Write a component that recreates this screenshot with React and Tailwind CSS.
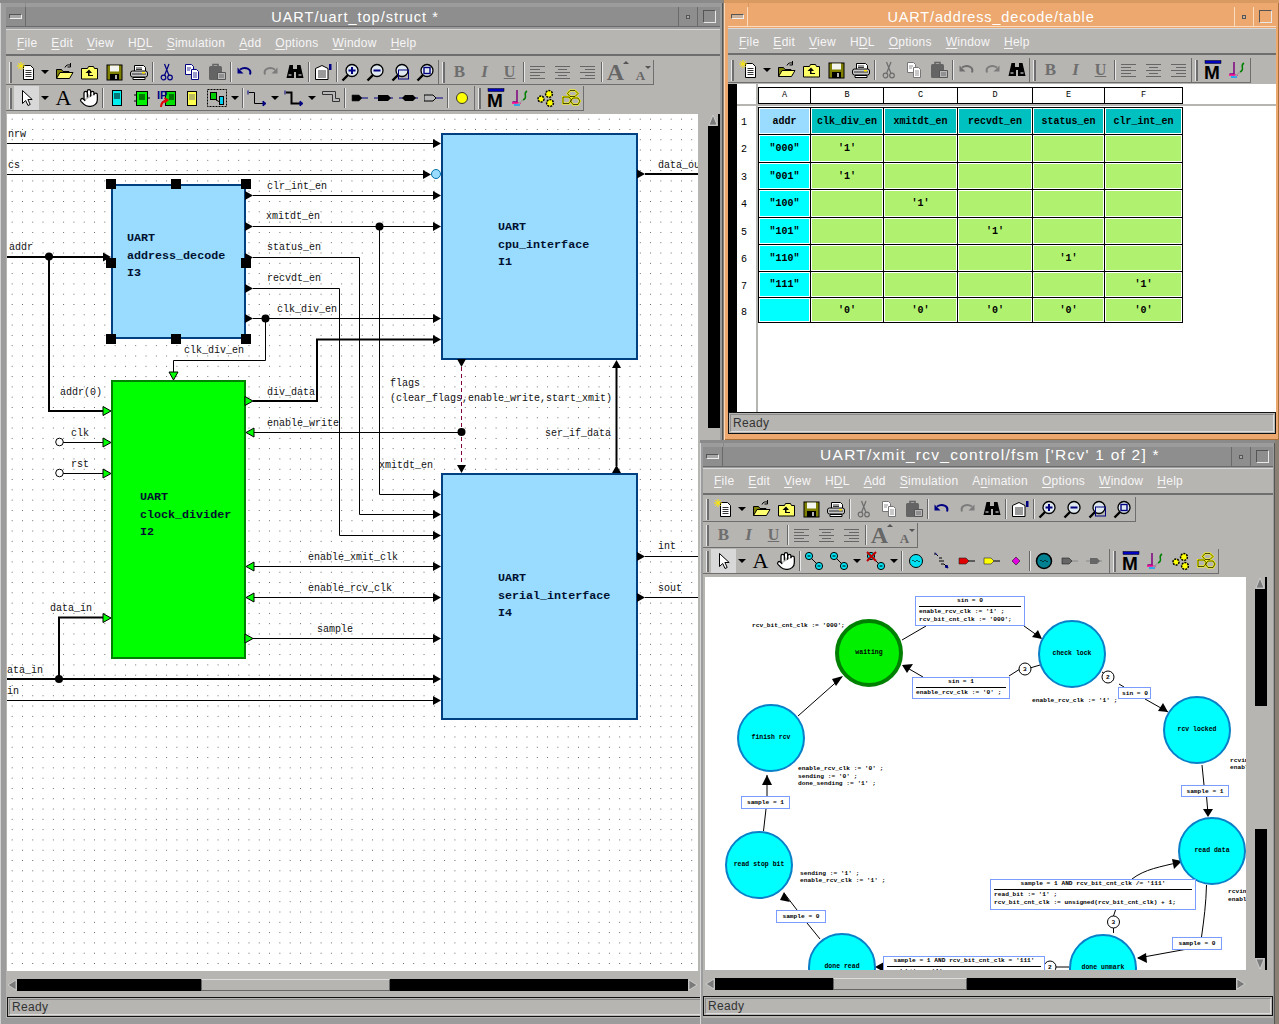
import { Hand } from 'lucide-react'

const Svg = ({ children }) => (
  <svg width="20" height="20" viewBox="0 0 20 20" className="block">{children}</svg>
)

const gearPair = (
  <g fill="#ffff00" stroke="#000" strokeWidth="1.5">
    <circle cx="5" cy="11" r="3" strokeDasharray="2 1" />
    <circle cx="13" cy="6" r="3.4" strokeDasharray="2 1" />
    <circle cx="14" cy="15" r="3.4" strokeDasharray="2 1" />
  </g>
)

const scissors = (c) => (
  <g fill="none" stroke={c} strokeWidth="1.2">
    <circle cx="6.5" cy="15.5" r="2.3" />
    <circle cx="13" cy="15.5" r="2.3" />
    <path d="M7.5 13.5 12 2M12 13.5 7.5 2" />
  </g>
)

const copyDocs = (c) => (
  <g fill="#fff" stroke={c} strokeWidth="1">
    <path d="M3.5 2.5h6l2 2v8h-8z" />
    <path d="M9.5 7.5h5l2 2v8h-7z" />
    <path d="M5 6h4M5 8h3M11 11h4M11 13h4M11 15h4" strokeWidth="0.8" />
  </g>
)

const zoomLens = (inner) => (
  <g>
    <path d="M7 13 1.5 18.5" stroke="#000" strokeWidth="2.4" />
    <circle cx="11" cy="8.5" r="6" fill="#dfe8ee" stroke="#000" strokeWidth="1.3" />
    {inner}
  </g>
)

const alignLines = (rows) => (
  <path d={rows} stroke="#666" strokeWidth="1" fill="none" />
)

const portShape = (body, line) => (
  <g>
    <path d="M11 10h8" stroke={line} strokeWidth="1" />
    <path d="M3 7h7l3 3-3 3H3z" fill={body} stroke="#222" strokeWidth="0.6" />
  </g>
)

const twoStates = (
  <g stroke="#000" strokeWidth="1" fill="#00e0f0">
    <path d="M5 5 15 15" fill="none" />
    <circle cx="5" cy="5" r="3.6" />
    <circle cx="15" cy="15" r="3.6" />
    <path d="M3.5 5h3M13.5 15h3" />
  </g>
)

const icons = {
  new: (
    <Svg>
      <path d="M6.5 3.5h7l3 3v11h-10z" fill="#fff" stroke="#000" />
      <path d="M8.5 8.5h6M8.5 10.5h6M8.5 12.5h6M8.5 14.5h6" stroke="#000" strokeWidth="0.8" />
      <path d="M4 0v8M0 4h8M1.2 1.2l5.6 5.6M6.8 1.2 1.2 6.8" stroke="#ffe800" strokeWidth="1" />
    </Svg>
  ),
  open: (
    <Svg>
      <path d="M2.5 16V7.5h5l1.5 2h6V16z" fill="#808000" stroke="#000" />
      <path d="M2.5 16.5 6 10.5h13l-3.5 6z" fill="#ffff70" stroke="#000" />
      <path d="M11 5.5c1-2.5 3-3 5.5-2.5M16.5 1v4h-3" fill="none" stroke="#000" />
    </Svg>
  ),
  up: (
    <Svg>
      <path d="M2.5 17V6.5h6l1-2h5l1 2h3V17z" fill="#ffff66" stroke="#000" />
      <path d="M10 7.5 6.5 11H9v3h5v-1h-3.5v-2H13z" fill="#000" />
    </Svg>
  ),
  save: (
    <Svg>
      <rect x="3" y="3" width="15" height="15" fill="#808000" stroke="#000" />
      <rect x="6" y="3.5" width="9" height="6" fill="#f4f4f0" />
      <rect x="6" y="12" width="9" height="6" fill="#000" />
      <rect x="11" y="13" width="2" height="4" fill="#b4b4b0" />
    </Svg>
  ),
  print: (
    <Svg>
      <path d="M5.5 9V3.5h9l2 2V9" fill="#fff" stroke="#000" />
      <rect x="1.5" y="9" width="17" height="6" rx="2" fill="#c8c8c8" stroke="#000" />
      <path d="M4 15.5h12v2H4z" fill="#fff" stroke="#000" />
      <path d="M7 6h6M7 7.5h6M3 12h14" stroke="#000" strokeWidth="0.8" />
      <rect x="13" y="10" width="3" height="1.5" fill="#ffe800" />
    </Svg>
  ),
  cut: <Svg>{scissors('#000080')}</Svg>,
  cutOff: <Svg>{scissors('#6c6c6c')}</Svg>,
  copy: <Svg>{copyDocs('#000080')}</Svg>,
  copyOff: <Svg>{copyDocs('#777')}</Svg>,
  paste: (
    <Svg>
      <rect x="2" y="4" width="13" height="14" rx="1.5" fill="#646464" />
      <path d="M6 4.5V2.5h5v2" fill="none" stroke="#646464" strokeWidth="1.6" />
      <path d="M10.5 10.5h8v7h-8z" fill="#b8b8b8" stroke="#555" />
      <path d="M12 13h5M12 15h5" stroke="#555" strokeWidth="0.8" />
    </Svg>
  ),
  undo: (
    <Svg>
      <path d="M5 7.5c5-3 12-1 10 5" fill="none" stroke="#000080" strokeWidth="2" />
      <path d="M2.5 5.5v6h6z" fill="#000080" />
    </Svg>
  ),
  undoOff: (
    <Svg>
      <path d="M5 7.5c5-3 12-1 10 5" fill="none" stroke="#6e6e6e" strokeWidth="2" />
      <path d="M2.5 5.5v6h6z" fill="#6e6e6e" />
    </Svg>
  ),
  redo: (
    <Svg>
      <path d="M15 7.5c-5-3-12-1-10 5" fill="none" stroke="#7c7c7c" strokeWidth="2" />
      <path d="M17.5 5.5v6h-6z" fill="#7c7c7c" />
    </Svg>
  ),
  bino: (
    <Svg>
      <path d="M4.5 3h3.5v4h4V3h3.5l3 13h-7.5V10h-2v6H1.5z" fill="#000" />
      <path d="M3.5 13h3M13.5 13h3" stroke="#fff" strokeWidth="1" />
    </Svg>
  ),
  props: (
    <Svg>
      <path d="M2.5 6.5 9 3.5l6 3v11H2.5z" fill="#fff" stroke="#000" />
      <path d="M5 9h8M5 11h8M5 13h8M5 15h8" stroke="#000" strokeWidth="0.8" />
      <rect x="16" y="2" width="2.5" height="6" fill="#000080" />
    </Svg>
  ),
  zin: <Svg>{zoomLens(<path d="M7.5 8.5h7M11 5v7" stroke="#000080" strokeWidth="2" />)}</Svg>,
  zout: <Svg>{zoomLens(<path d="M7.5 8.5h7" stroke="#000080" strokeWidth="2" />)}</Svg>,
  zfit: <Svg>{zoomLens(<rect x="7.5" y="8" width="10" height="9" fill="none" stroke="#000080" />)}</Svg>,
  zsel: <Svg>{zoomLens(<rect x="8" y="5.5" width="6" height="6" fill="none" stroke="#000080" strokeWidth="1.4" />)}</Svg>,
  bold: <span className="font-['Liberation_Serif',serif] text-[17px] font-bold text-[#6e6e6e]">B</span>,
  italic: <span className="font-['Liberation_Serif',serif] text-[17px] font-bold italic text-[#6e6e6e]">I</span>,
  under: <span className="font-['Liberation_Serif',serif] text-[16px] font-bold text-[#6e6e6e] underline">U</span>,
  left: <Svg>{alignLines('M2 4.5h15M2 7.5h10M2 10.5h15M2 13.5h10M2 16.5h15')}</Svg>,
  center: <Svg>{alignLines('M2 4.5h15M5 7.5h9M2 10.5h15M5 13.5h9M2 16.5h15')}</Svg>,
  right: <Svg>{alignLines('M2 4.5h15M7 7.5h10M2 10.5h15M7 13.5h10M2 16.5h15')}</Svg>,
  bigA: (
    <span className="relative font-['Liberation_Serif',serif] text-[24px] leading-none font-bold text-[#666]">
      A
      <span className="absolute top-[1px] -right-[5px] h-0 w-0 border-x-[3px] border-b-[3px] border-x-transparent border-b-[#555]" />
    </span>
  ),
  smallA: (
    <span className="relative mt-[6px] font-['Liberation_Serif',serif] text-[13px] leading-none font-bold text-[#666]">
      A
      <span className="absolute -top-[3px] -right-[6px] h-0 w-0 border-x-[3px] border-t-[3px] border-x-transparent border-t-[#555]" />
    </span>
  ),
  arrow: (
    <Svg>
      <path d="M5.5 2.5v13l3.2-3 2.3 5 2.2-1-2.3-5h4.3z" fill="#fff" stroke="#000" />
    </Svg>
  ),
  text: <span className="font-['Liberation_Serif',serif] text-[22px] leading-none text-black">A</span>,
  hand: <Hand size={20} fill="#fff" color="#000" strokeWidth={1.5} />,
  blockCyan: (
    <Svg>
      <rect x="5.5" y="2.5" width="9" height="15" fill="#00f0f0" stroke="#000" />
      <path d="M7 6h6M7 8h6M7 10h6" stroke="#000" />
    </Svg>
  ),
  blockGreen: (
    <Svg>
      <rect x="4.5" y="3.5" width="11" height="14" fill="#00f000" stroke="#000" />
      <path d="M7 7h6M7 9h6M7 11h6M2 7h3M2 13h3M15 10h3" stroke="#000" />
    </Svg>
  ),
  ip: (
    <Svg>
      <rect x="8.5" y="3.5" width="10" height="14" fill="#00e000" stroke="#000" />
      <path d="M12 7h5M12 9h5M12 11h5" stroke="#000" />
      <text x="0" y="11" fontSize="11" fontWeight="bold" fontFamily="Liberation Sans" fill="#000080">IP</text>
      <path d="M4 19c0-4 2-6 6-7M7.5 10l3 2-3 2.5" fill="none" stroke="#e00000" strokeWidth="2" />
    </Svg>
  ),
  blockYellow: (
    <Svg>
      <rect x="5.5" y="3.5" width="9" height="14" fill="#ffff50" stroke="#000" />
      <path d="M7 7h6M7 9h6M7 11h6" stroke="#777" />
    </Svg>
  ),
  group: (
    <Svg>
      <rect x="0.5" y="1.5" width="19" height="17" fill="none" stroke="#000" strokeDasharray="2 1" />
      <rect x="3.5" y="4.5" width="6" height="7" fill="#00d000" stroke="#000" />
      <rect x="12.5" y="8.5" width="4" height="8" fill="#00d0f0" stroke="#000" />
      <path d="M9 12 13 14" stroke="#000" />
    </Svg>
  ),
  wire: (
    <Svg>
      <path d="M2 4.5h5.5v11H16" fill="none" stroke="#000" />
      <path d="M1 2.5v4M16 13v5l3-2.5z" fill="#000080" stroke="#000080" />
    </Svg>
  ),
  bus: (
    <Svg>
      <path d="M2 4.5h5.5v11H16" fill="none" stroke="#000" strokeWidth="2" />
      <path d="M1 2.5v4M16 13v5l3-2.5z" fill="#000080" stroke="#000080" />
    </Svg>
  ),
  ripper: (
    <Svg>
      <path d="M1.5 6.5h10v7h7v-3h-4v-7h-13z" fill="#b8b8b8" stroke="#333" strokeWidth="1" />
    </Svg>
  ),
  portIn: <Svg>{portShape('#000', '#000080')}</Svg>,
  portBuf: (
    <Svg>
      <path d="M0 10h19" stroke="#000080" />
      <path d="M4 7h10l3 3-3 3H4z" fill="#000" />
    </Svg>
  ),
  portBi: (
    <Svg>
      <path d="M0 10h19" stroke="#000080" />
      <path d="M3 10l3-3h8l3 3-3 3H6z" fill="#000" />
    </Svg>
  ),
  portGhost: (
    <Svg>
      <path d="M12 10h7" stroke="#000080" />
      <path d="M0 7h9l3 3-3 3H0z" fill="#b8b8b8" stroke="#000" />
    </Svg>
  ),
  dot: (
    <Svg>
      <circle cx="10" cy="10" r="5.5" fill="#ffff00" stroke="#333" />
    </Svg>
  ),
  mBar: (
    <Svg>
      <rect x="2" y="0.5" width="16" height="3" fill="#0000c0" stroke="#000" strokeWidth="0.5" />
      <text x="1" y="19" fontSize="19" fontWeight="bold" fontFamily="Liberation Sans" fill="#000">M</text>
    </Svg>
  ),
  squiggle: (
    <Svg>
      <path d="M6 2v12H1.5" fill="none" stroke="#800080" strokeWidth="1.5" />
      <path d="M1 15h9" stroke="#ff0090" strokeWidth="1.5" />
      <path d="M3 17h6" stroke="#00a0ff" strokeWidth="1.5" />
      <path d="M16 3c-5 3 2 6-4 9" fill="none" stroke="#008000" strokeWidth="1.5" />
      <path d="M12 12c-2 2-3 3-5 4" fill="none" stroke="#a0a0a0" strokeWidth="1.5" />
    </Svg>
  ),
  gears: <Svg>{gearPair}</Svg>,
  links: (
    <Svg>
      <g fill="#b6b5b2" stroke="#ffff00" strokeWidth="2">
        <path d="M9 2.5h5l3 3-3 3H9L6.5 5.5z" />
        <path d="M2 9h6l2.5 3-2.5 3.5H2z" />
        <path d="M12 10h5l2 3-2 3.5h-5L9.5 13z" />
      </g>
      <path d="M2 9h6l2.5 3-2.5 3.5H2zM9 2.5h5l3 3-3 3H9L6.5 5.5zM12 10h5l2 3-2 3.5h-5L9.5 13z" fill="none" stroke="#000" strokeWidth="0.7" />
    </Svg>
  ),
  states: <Svg>{twoStates}</Svg>,
  statesX: (
    <Svg>
      {twoStates}
      <path d="M1 1l9 9M10 1l-9 9" stroke="#c00000" strokeWidth="2" />
    </Svg>
  ),
  stateIcon: (
    <Svg>
      <circle cx="10" cy="10" r="6.5" fill="#00e0f0" stroke="#000" />
      <path d="M6 10c1-1 1-1 2 0s1 1 2 0 1-1 2 0 1 1 2 0" stroke="#000" fill="none" strokeWidth="0.7" />
    </Svg>
  ),
  fork: (
    <Svg>
      <path d="M3 3h2l2 2M8 7h3M8 10h5M10 13h3l3 3" fill="none" stroke="#000" />
      <path d="M4 1.5 6 4M17 17l-3-1 2-2z" fill="#000080" stroke="#000080" />
    </Svg>
  ),
  fsmRed: <Svg>{portShape('#e00000', '#000')}</Svg>,
  fsmYellow: <Svg>{portShape('#ffff00', '#000')}</Svg>,
  diamond: (
    <Svg>
      <path d="M10 6l4 4-4 4-4-4z" fill="#e000e0" stroke="#000" strokeWidth="0.5" />
    </Svg>
  ),
  stateDark: (
    <Svg>
      <circle cx="10" cy="10" r="7.5" fill="#008090" stroke="#000" strokeWidth="1.5" />
      <path d="M6 10c1-1 1-1 2 0s1 1 2 0 1-1 2 0 1 1 2 0" stroke="#000" fill="none" strokeWidth="0.7" />
    </Svg>
  ),
  ghostA: <Svg>{portShape('#666', '#888')}</Svg>,
  ghostB: (
    <Svg>
      <path d="M2 10h16" stroke="#888" />
      <path d="M6 7h7l3 3-3 3H6z" fill="#666" />
    </Svg>
  ),
}

function Toolbar({ items }) {
  return (
    <div className="flex h-full items-center border-r border-b border-[#6e6e6e]">
      <div className="flex h-full w-[8px] shrink-0 items-center pl-[3px]">
        <div className="h-[21px] w-[3px] border-r-2 border-l border-r-[#6e6e6e] border-l-[#e8e8e8]" />
      </div>
      {items.map((item, i) => {
        if (item === '|') {
          return (
            <div key={i} className="flex h-full w-[3px] justify-center py-[2px]">
              <div className="w-[2px] border-r border-l border-r-[#e8e8e8] border-l-[#666]" />
            </div>
          )
        }
        if (item === 'dd') {
          return (
            <div key={i} className="flex h-full w-[12px] items-center justify-center">
              <div className="h-0 w-0 border-x-[4px] border-t-[4px] border-x-transparent border-t-black" />
            </div>
          )
        }
        if (item === 'gap') return <div key={i} className="w-[3px]" />
        const active = item === 'arrow'
        return (
          <div key={i} className={`flex h-full w-[25px] items-center justify-center ${active ? 'bg-[#d8d8d8]' : ''}`}>
            {icons[item]}
          </div>
        )
      })}
    </div>
  )
}

function Menu({ items, className }) {
  return (
    <div className={`flex h-[27px] items-center gap-[14px] border-t border-b-2 border-t-[#d8d8d8] border-b-[#6e6e6e] pl-[11px] text-[12px] tracking-[0.25px] text-[#f6f6f6] ${className}`}>
      {items.map(([before, key, after]) => (
        <span key={before + key + after}>
          {before}
          <span className="underline underline-offset-[2px]">{key}</span>
          {after}
        </span>
      ))}
    </div>
  )
}

function StatusBar({ className }) {
  return (
    <div className={`border border-[#111] p-[1px] ${className}`}>
      <div className="flex h-full items-center border border-[#8a8a8a] border-r-[#dedede] border-b-[#dedede] pl-[2px] text-[12px] tracking-[0.3px] text-[#333]">
        Ready
      </div>
    </div>
  )
}

function Window({ className, frame, titleBg, line, title, titleText, tickClass, menus, menuClass, menuText = '', rows, rowsClass, children, statusClass }) {
  return (
    <div className={`absolute flex flex-col ${frame} ${className}`}>
      <div className={`absolute top-0 left-0 h-[3px] w-full ${line}`} />
      <div className={`absolute top-0 h-[7px] w-px ${line} ${tickClass}`} />
      <div className={`flex h-[20px] shrink-0 border-b ${titleBg}`}>
        <div className="flex w-[20px] items-center justify-center border-r border-inherit">
          <div className="h-[5px] w-[13px] border border-[#555] border-r-[#eee] border-b-[#eee] bg-[#b8b8b8]/60" />
        </div>
        <div className={`flex-1 truncate text-center leading-[19px] font-medium text-white ${titleText}`}>{title}</div>
        <div className="flex w-[20px] items-center justify-center border-x border-inherit">
          <div className="h-[4px] w-[4px] border border-[#555] bg-[#b8b8b8]/60" />
        </div>
        <div className="flex w-[22px] items-center justify-center">
          <div className="h-[13px] w-[13px] border border-[#555] border-r-[#e8e8e8] border-b-[#e8e8e8]" />
        </div>
      </div>
      <div className={`flex flex-1 flex-col bg-[#b6b5b2] ${menuClass}`}>
        <Menu items={menus} className={menuText} />
        <div className={`flex flex-col gap-[1px] ${rowsClass}`}>
          {rows.map((row, i) => (
            <div key={i} className="flex h-[25px]">
              {row.map((items, j) => (
                <Toolbar key={j} items={items} />
              ))}
            </div>
          ))}
        </div>
        {children}
        <StatusBar className={statusClass} />
      </div>
    </div>
  )
}

const Triangle = ({ dir }) => (
  <svg width="10" height="12" viewBox="0 0 10 12" className="block shrink-0">
    <rect width="10" height="12" fill="#b6b5b2" />
    {dir === 'left' && <path d="M9 1v10L1 6z" fill="#7a7a7a" stroke="#e8e8e8" strokeWidth="0.6" />}
    {dir === 'right' && <path d="M1 1v10l8-5z" fill="#7a7a7a" stroke="#e8e8e8" strokeWidth="0.6" />}
    {dir === 'up' && <path d="M1 11h8L5 1z" fill="#7a7a7a" stroke="#e8e8e8" strokeWidth="0.6" />}
    {dir === 'down' && <path d="M1 1h8l-4 10z" fill="#7a7a7a" stroke="#e8e8e8" strokeWidth="0.6" />}
  </svg>
)

const dots = "bg-white bg-[radial-gradient(circle,#5c5c5c_0.6px,transparent_0.9px)] bg-[length:10.3px_10.3px]"

const marks = [
  '-top-[7px] -left-[7px]', '-top-[7px] left-[58px]', '-top-[7px] -right-[7px]',
  'top-[72px] -left-[7px]', 'top-[72px] -right-[7px]',
  '-bottom-[7px] -left-[7px]', '-bottom-[7px] left-[58px]', '-bottom-[7px] -right-[7px]',
]

const BlockLabel = ({ lines }) => (
  <div className="font-['Liberation_Mono',monospace] text-[11.7px] leading-[17.5px] font-bold text-[#001030]">
    {lines.map((l) => <div key={l}>{l}</div>)}
  </div>
)

const Arrow = ({ x, y, dir = 'r', fill = '#000', stroke = 'none' }) => {
  const s = 4.5
  const pts = {
    r: `${x - 8},${y - s} ${x},${y} ${x - 8},${y + s}`,
    l: `${x + 8},${y - s} ${x},${y} ${x + 8},${y + s}`,
    d: `${x - s},${y - 8} ${x},${y} ${x + s},${y - 8}`,
    u: `${x - s},${y + 8} ${x},${y} ${x + s},${y + 8}`,
  }[dir]
  return <polygon points={pts} fill={fill} stroke={stroke} />
}

const Junction = ({ x, y, r = 4 }) => <circle cx={x} cy={y} r={r} fill="#000" />

const thinWires = [
  'M7 143.5H434', 'M7 174.5H424', 'M253 195.5H434', 'M253 226.5H434', 'M379.5 226.5V494.5H434',
  'M253 257.5H359.5V514.5H434', 'M253 288.5H339.5V535.5H434', 'M253 318.5H434',
  'M265.5 318.5V360.5H173.5V372', 'M254 432.5H461', 'M254 566.5H434', 'M254 597.5H434', 'M253 638.5H434',
  'M63 442.5H104', 'M63 473.5H104', 'M7 700.5H434', 'M645 556.5H698', 'M645 597.5H698',
]

const boldWires = [
  'M7 257H104', 'M49 257V411H104', 'M253 401H317V339.5H434', 'M645 174H698', 'M616.5 368V466',
  'M7 679H434', 'M59 679V617.5H104',
]

const wireLabels = [
  ['nrw', 8, 137], ['cs', 8, 168], ['clr_int_en', 267, 189], ['xmitdt_en', 266, 219], ['status_en', 267, 250],
  ['recvdt_en', 267, 281], ['clk_div_en', 277, 312], ['clk_div_en', 184, 353], ['addr', 9, 250], ['addr(0)', 60, 395],
  ['div_data', 267, 395], ['enable_write', 267, 426], ['flags', 390, 386], ['(clear_flags,enable_write,start_xmit)', 390, 401],
  ['ser_if_data', 545, 436], ['xmitdt_en', 379, 468], ['data_out', 658, 168], ['int', 658, 549], ['sout', 658, 591],
  ['enable_xmit_clk', 308, 560], ['enable_rcv_clk', 308, 591], ['sample', 317, 632], ['clk', 71, 436], ['rst', 71, 467],
  ['data_in', 50, 611], ['data_in', 1, 673], ['in', 7, 694],
]

function Schematic() {
  return (
    <div className={`relative h-[857px] w-[691px] shrink-0 overflow-hidden ${dots}`}>
      <div className="absolute top-[70px] left-[104px] h-[155px] w-[135px] border-2 border-[#004080] bg-[#99dcff] pt-[44px] pl-[14px]">
        <BlockLabel lines={['UART', 'address_decode', 'I3']} />
        {marks.map((m) => <div key={m} className={`absolute h-[10px] w-[10px] bg-black ${m}`} />)}
      </div>
      <div className="absolute top-[19px] left-[434px] h-[227px] w-[197px] border-2 border-[#004080] bg-[#99dcff] pt-[84px] pl-[55px]">
        <BlockLabel lines={['UART', 'cpu_interface', 'I1']} />
      </div>
      <div className="absolute top-[266px] left-[104px] h-[279px] w-[135px] border-2 border-[#008000] bg-[#00ff00] pt-[107px] pl-[27px]">
        <BlockLabel lines={['UART', 'clock_divider', 'I2']} />
      </div>
      <div className="absolute top-[359px] left-[434px] h-[247px] w-[197px] border-2 border-[#004080] bg-[#99dcff] pt-[95px] pl-[55px]">
        <BlockLabel lines={['UART', 'serial_interface', 'I4']} />
      </div>
      <svg width="691" height="857" viewBox="7 114 691 857" className="absolute inset-0 font-['Liberation_Mono',monospace] text-[10px]">
        {thinWires.map((d) => <path key={d} d={d} fill="none" stroke="#000" />)}
        {boldWires.map((d) => <path key={d} d={d} fill="none" stroke="#000" strokeWidth="2" />)}
        <path d="M461.5 367V465" fill="none" stroke="#800040" strokeDasharray="4 3" />
        {[143.5, 195.5, 226.5, 318.5, 339.5, 494.5, 514.5, 535.5, 566.5, 597.5, 638.5, 679, 700.5].map((y) => (
          <Arrow key={y} x={441} y={y} />
        ))}
        <Arrow x={431} y={174.5} />
        <circle cx="436" cy="174" r="4.5" fill="#99dcff" stroke="#0070a8" />
        {[195.5, 226.5, 257.5, 288.5, 318.5].map((y) => <Arrow key={y} x={253} y={y} />)}
        <Arrow x={111} y={257} />
        <Arrow x={111} y={411} fill="#00ff00" stroke="#000" />
        <Arrow x={111} y={442.5} fill="#00ff00" stroke="#000" />
        <Arrow x={111} y={473.5} fill="#00ff00" stroke="#000" />
        <Arrow x={111} y={618} fill="#00ff00" stroke="#000" />
        <Arrow x={253} y={401} fill="#00ff00" stroke="#000" />
        <Arrow x={253} y={638.5} fill="#00ff00" stroke="#000" />
        <Arrow x={246} y={432.5} dir="l" fill="#00ff00" stroke="#000" />
        <Arrow x={246} y={566.5} dir="l" fill="#00ff00" stroke="#000" />
        <Arrow x={246} y={597.5} dir="l" fill="#00ff00" stroke="#000" />
        <Arrow x={173.5} y={380} dir="d" fill="#00ff00" stroke="#000" />
        <Arrow x={461.5} y={367} dir="d" />
        <Arrow x={461.5} y={473} dir="d" />
        <Arrow x={616.5} y={360} dir="u" />
        <Arrow x={616.5} y={465} dir="u" />
        <Arrow x={645} y={174} />
        <Arrow x={645} y={556.5} />
        <Arrow x={645} y={597.5} />
        <Junction x={49} y={256.5} />
        <Junction x={379.5} y={226.5} />
        <Junction x={265.5} y={318.5} />
        <Junction x={461.5} y={432} />
        <Junction x={59} y={679} />
        <circle cx="59.5" cy="442" r="3.8" fill="#fff" stroke="#000" />
        <circle cx="59.5" cy="473" r="3.8" fill="#fff" stroke="#000" />
        {wireLabels.map(([t, x, y]) => (
          <text key={t + x + y} x={x} y={y} fill="#111">{t}</text>
        ))}
      </svg>
    </div>
  )
}

const columns = ['A', 'B', 'C', 'D', 'E', 'F']
const headers = ['addr', 'clk_div_en', 'xmitdt_en', 'recvdt_en', 'status_en', 'clr_int_en']
const tableRows = [
  { n: 2, h: 'h-[27px]', vals: ['"000"', "'1'", '', '', '', ''] },
  { n: 3, h: 'h-[26px]', vals: ['"001"', "'1'", '', '', '', ''] },
  { n: 4, h: 'h-[27px]', vals: ['"100"', '', "'1'", '', '', ''] },
  { n: 5, h: 'h-[26px]', vals: ['"101"', '', '', "'1'", '', ''] },
  { n: 6, h: 'h-[26px]', vals: ['"110"', '', '', '', "'1'", ''] },
  { n: 7, h: 'h-[25px]', vals: ['"111"', '', '', '', '', "'1'"] },
  { n: 8, h: 'h-[24px]', vals: ['', "'0'", "'0'", "'0'", "'0'", "'0'"] },
]
const gridCols = 'grid grid-cols-[51px_72px_73px_74px_71px_77px]'

function Truth() {
  return (
    <div className="mt-[1px] flex h-[328px] bg-white font-['Liberation_Mono',monospace] text-[10px] font-bold">
      <div className="w-[9px] shrink-0 bg-black" />
      <div className="relative flex-1 pt-[3px] pl-[21px]">
        <div className="absolute top-0 bottom-0 left-[19px] w-[2px] bg-[#b6b5b2]" />
        <div className="absolute top-[20px] right-0 left-0 h-[2px] bg-[#b6b5b2]" />
        <div className="relative grid h-[17px] w-max grid-cols-[52px_73px_74px_75px_72px_78px] border-t border-l border-black">
          {columns.map((c) => (
            <div key={c} className="flex items-center justify-center border-r border-b border-black bg-white text-[8.5px] font-normal">{c}</div>
          ))}
        </div>
        <div className="relative mt-[3px] w-max bg-black p-px">
          <div className="absolute top-[8px] -left-[17px] text-[10px] font-normal">1</div>
          <div className={`${gridCols} h-[26px] gap-px`}>
            {headers.map((t, i) => (
              <div key={t} className={`flex items-center justify-center border border-white ${i === 0 ? 'bg-[#99dcff]' : 'bg-[#00c0c0]'}`}>{t}</div>
            ))}
          </div>
          {tableRows.map((row) => (
            <div key={row.n} className={`relative mt-px ${gridCols} gap-px ${row.h}`}>
              <div className="absolute top-[7px] -left-[18px] text-[10px] font-normal">{row.n}</div>
              {row.vals.map((v, i) => (
                <div key={i} className={`flex items-center justify-center border border-white ${i === 0 ? 'bg-[#00ffff]' : 'bg-[#b0f270]'}`}>{v}</div>
              ))}
            </div>
          ))}
        </div>
      </div>
    </div>
  )
}

const State = ({ className, label, green }) => (
  <div className={`absolute flex h-[68px] w-[68px] items-center justify-center rounded-full text-[6.5px] font-bold ${green ? 'border-[4px] border-[#008000] bg-[#00f000]' : 'border-2 border-[#0a80c8] bg-[#00ffff]'} ${className}`}>
    {label}
  </div>
)

const Note = ({ className, cond, lines }) => (
  <div className={`absolute border border-[#7b9cff] bg-white px-[3px] leading-[7px] font-bold ${className}`}>
    <div className={`text-center whitespace-nowrap ${lines ? 'border-b border-black pb-[2px]' : 'pt-[2px]'}`}>{cond}</div>
    {lines && lines.map((l) => <div key={l} className="mt-[1px] whitespace-nowrap">{l}</div>)}
  </div>
)

const fsmLines = [
  'M902 641 926 627', 'M1024 627 1041 639', 'M1040 666 1030 669', 'M1020 670 1009 677', 'M923 678 904 667',
  'M1102 673 1114 681', 'M1124 688 1119 685', 'M1145 700 1168 713', 'M1202 766 1204 786', 'M1206.5 797 1208 815',
  'M1206.5 886C1206 905 1204 920 1201.5 938', 'M1187.5 950 1138 959', 'M1113.5 934V929', 'M1113.5 917 1115.5 911',
  'M1132 880C1145 870 1160 868 1180 863', 'M1069 968H1056', 'M1044 968H883', 'M820 940 807 924', 'M797 911 784 894',
  'M763.5 832 766 810', 'M767 797V776', 'M798 717 842 678',
]

const fsmHeads = [
  '1042,640 1032,638 1038,631', '902,666 913,665 907,674', '1168,713 1158,712 1163,704', '1208,818 1203,810 1213,810',
  '1182,862 1172,860 1174,870', '1137,959 1146,954 1147,964', '875,968 884,963 884,973', '784,893 790,903 780,901',
  '767,776 762,786 772,786', '843,677 836,687 832,680',
]

const fsmNotes = [
  ["rcv_bit_cnt_clk := '000';", 752, 628], ["enable_rcv_clk := '1' ;", 1032, 703], ["enable_rcv_clk := '0' ;", 798, 771],
  ["sending := '0' ;", 798, 779], ["done_sending := '1' ;", 798, 786], ["rcving := '1' ;", 1230, 763], ["enable_rcv", 1230, 770],
  ["sending := '1' ;", 800, 876], ["enable_rcv_clk := '1' ;", 800, 883], ["rcving :", 1228, 894], ["enable_", 1228, 902],
]

function Fsm() {
  return (
    <div className="relative h-[393px] w-[541px] shrink-0 overflow-hidden bg-white font-['Liberation_Mono',monospace] text-[6.2px] text-black">
      <svg width="541" height="393" viewBox="705 578 541 393" className="absolute inset-0 font-['Liberation_Mono',monospace] text-[6.2px] font-bold">
        {fsmLines.map((d) => <path key={d} d={d} fill="none" stroke="#000" />)}
        {fsmHeads.map((p) => <polygon key={p} points={p} fill="#000" />)}
        {[[1025, 670, '3'], [1108, 678, '2'], [1113.5, 923, '3'], [1050, 968, '2']].map(([x, y, t]) => (
          <g key={x}>
            <circle cx={x} cy={y} r="6" fill="#fff" stroke="#000" />
            <text x={x - 2} y={y + 2}>{t}</text>
          </g>
        ))}
        {fsmNotes.map(([t, x, y]) => <text key={t} x={x} y={y}>{t}</text>)}
      </svg>
      <State className="top-[42px] left-[130px]" label="waiting" green />
      <State className="top-[43px] left-[333px]" label="check lock" />
      <State className="top-[119px] left-[458px]" label="rcv locked" />
      <State className="top-[127px] left-[32px]" label="finish rcv" />
      <State className="top-[240px] left-[473px]" label="read data" />
      <State className="top-[254px] left-[20px]" label="read stop bit" />
      <State className="top-[356px] left-[103px]" label="done read" />
      <State className="top-[357px] left-[364px]" label="done unmark" />
      <Note className="top-[19px] left-[210px] h-[30px] w-[110px]" cond="sin = 0" lines={["enable_rcv_clk := '1' ;", "rcv_bit_cnt_clk := '000';"]} />
      <Note className="top-[100px] left-[207px] h-[22px] w-[98px]" cond="sin = 1" lines={["enable_rcv_clk := '0' ;"]} />
      <Note className="top-[110px] left-[413px] h-[12px] w-[33px]" cond="sin = 0" />
      <Note className="top-[208px] left-[476px] h-[12px] w-[48px]" cond="sample = 1" />
      <Note className="top-[219px] left-[36px] h-[13px] w-[49px]" cond="sample = 1" />
      <Note className="top-[333px] left-[71px] h-[13px] w-[50px]" cond="sample = 0" />
      <Note className="top-[302px] left-[285px] h-[31px] w-[206px]" cond="sample = 1 AND rcv_bit_cnt_clk /= '111'" lines={["read_bit := '1' ;", "rcv_bit_cnt_clk := unsigned(rcv_bit_cnt_clk) + 1;"]} />
      <Note className="top-[360px] left-[467px] h-[13px] w-[50px]" cond="sample = 0" />
      <Note className="top-[379px] left-[178px] h-[30px] w-[162px]" cond="sample = 1 AND rcv_bit_cnt_clk = '111'" lines={["read_bit := '1' ;"]} />
    </div>
  )
}

const fileTools = ['new', 'dd', 'open', 'up', 'save', 'print', '|']
const fontTools = ['bold', 'italic', 'under', '|', 'left', 'center', 'right', '|', 'bigA', 'smallA']

export default function App() {
  return (
    <div className="relative h-[1024px] w-[1279px] overflow-hidden bg-[#8a8174] font-['Liberation_Sans',sans-serif]">
      <Window
        className="top-0 left-0 h-[1024px] w-[723px] pt-[7px] pr-[3px] pb-[6px] pl-[6px] shadow-[inset_1px_0_0_#d0d0d0,inset_-1px_0_0_#555]"
        frame="bg-[#9c9c9c]"
        line="bg-[#8a8a8a]"
        tickClass="left-[25px]"
        titleBg="bg-[#8e8e8e] border-[#6a6a6a]"
        titleText="pt-[1px] pl-[6px] text-[14.5px] tracking-[1px]"
        title="UART/uart_top/struct *"
        menus={[['', 'F', 'ile'], ['', 'E', 'dit'], ['', 'V', 'iew'], ['H', 'D', 'L'], ['', 'S', 'imulation'], ['', 'A', 'dd'], ['', 'O', 'ptions'], ['', 'W', 'indow'], ['', 'H', 'elp']]}
        menuClass="mt-[2px]"
        menuText="pt-[2px]"
        rowsClass="pt-[4px]"
        rows={[
          [
            [...fileTools, 'cut', 'copy', 'paste', '|', 'undo', 'redo', 'bino', '|', 'props', '|', 'zin', 'zout', 'zfit', 'zsel'],
            fontTools,
          ],
          [
            ['arrow', 'dd', 'text', 'hand', '|', 'blockCyan', 'blockGreen', 'ip', 'blockYellow', 'group', 'dd', '|', 'wire', 'dd', 'bus', 'dd', 'ripper', '|', 'portIn', 'portBuf', 'portBi', 'portGhost', '|', 'dot'],
            ['mBar', 'squiggle', 'gears', 'links'],
          ],
        ]}
        statusClass="mt-[6px] ml-[1px] h-[20px]"
      >
        <div className="mt-[3px] flex pl-[1px]">
          <Schematic />
          <div className="ml-[10px] flex h-[857px] w-[12px] flex-col bg-black">
            <Triangle dir="up" />
            <div className="h-[302px]" />
            <div className="h-[120px] bg-[#b6b5b2]" />
          </div>
        </div>
        <div className="mt-[8px] ml-[1px] flex h-[12px] w-[691px] bg-black">
          <Triangle dir="left" />
          <div className="ml-[184px] w-[189px] border border-[#666] border-t-[#ddd] bg-[#b6b5b2]" />
          <div className="flex-1" />
          <Triangle dir="right" />
        </div>
      </Window>

      <Window
        className="top-0 left-[724px] h-[440px] w-[555px] pt-[7px] pr-[3px] pb-[6px] pl-[4px] shadow-[inset_1px_0_0_#f8d8b8,inset_-1px_0_0_#a87038,inset_0_-1px_0_#a87038]"
        frame="bg-[#eca86e]"
        line="bg-[#d99a62]"
        tickClass="left-[24px]"
        titleBg="bg-[#eca86e] border-[#fbdcc0]"
        titleText="pt-[1px] text-[14.5px] tracking-[0.85px]"
        title="UART/address_decode/table"
        menus={[['', 'F', 'ile'], ['', 'E', 'dit'], ['', 'V', 'iew'], ['H', 'D', 'L'], ['', 'O', 'ptions'], ['', 'W', 'indow'], ['', 'H', 'elp']]}
        menuClass="mt-[1px]"
        menuText="pt-[2px]"
        rowsClass="pt-[3px]"
        rows={[
          [
            [...fileTools, 'cutOff', 'copyOff', 'paste', '|', 'undoOff', 'redo', 'bino'],
            ['bold', 'italic', 'under', '|', 'left', 'center', 'right'],
            ['mBar', 'squiggle'],
          ],
        ]}
        statusClass="h-[22px]"
      >
        <Truth />
      </Window>

      <Window
        className="top-[440px] left-[700px] h-[584px] w-[575px] pt-[7px] pr-[2px] pb-[6px] pl-[3px] shadow-[inset_1px_1px_0_#d8d8d8,inset_-1px_0_0_#555]"
        frame="bg-[#9c9c9c]"
        line="bg-[#8a8a8a]"
        tickClass="left-[23px]"
        titleBg="bg-[#8e8e8e] border-[#6a6a6a]"
        titleText="-mt-[2px] pl-[26px] text-[15.5px] tracking-[1.25px]"
        title="UART/xmit_rcv_control/fsm ['Rcv' 1 of 2] *"
        menus={[['', 'F', 'ile'], ['', 'E', 'dit'], ['', 'V', 'iew'], ['H', 'D', 'L'], ['', 'A', 'dd'], ['', 'S', 'imulation'], ['A', 'n', 'imation'], ['', 'O', 'ptions'], ['', 'W', 'indow'], ['', 'H', 'elp']]}
        menuClass="mt-[1px]"
        rowsClass="pt-[2px]"
        rows={[
          [[...fileTools, 'cutOff', 'copyOff', 'paste', '|', 'undo', 'redo', 'bino', '|', 'props', '|', 'zin', 'zout', 'zfit', 'zsel']],
          [fontTools],
          [
            ['arrow', 'dd', 'text', 'hand', '|', 'states', 'states', 'dd', 'statesX', 'dd', '|', 'stateIcon', 'fork', 'fsmRed', 'fsmYellow', 'diamond', '|', 'stateDark', 'ghostA', 'ghostB', 'gap'],
            ['mBar', 'squiggle', 'gears', 'links'],
          ],
        ]}
        statusClass="mt-[6px] h-[20px]"
      >
        <div className="mt-[3px] flex pl-[2px]">
          <Fsm />
          <div className="ml-[9px] flex h-[393px] w-[12px] flex-col bg-black">
            <Triangle dir="up" />
            <div className="h-[117px]" />
            <div className="h-[123px] bg-[#b6b5b2]" />
            <div className="flex-1" />
            <Triangle dir="down" />
          </div>
        </div>
        <div className="mt-[8px] ml-[2px] flex h-[12px] w-[541px] bg-black">
          <Triangle dir="left" />
          <div className="ml-[118px] w-[134px] border border-[#666] border-t-[#ddd] bg-[#b6b5b2]" />
          <div className="flex-1" />
          <Triangle dir="right" />
        </div>
      </Window>
    </div>
  )
}
